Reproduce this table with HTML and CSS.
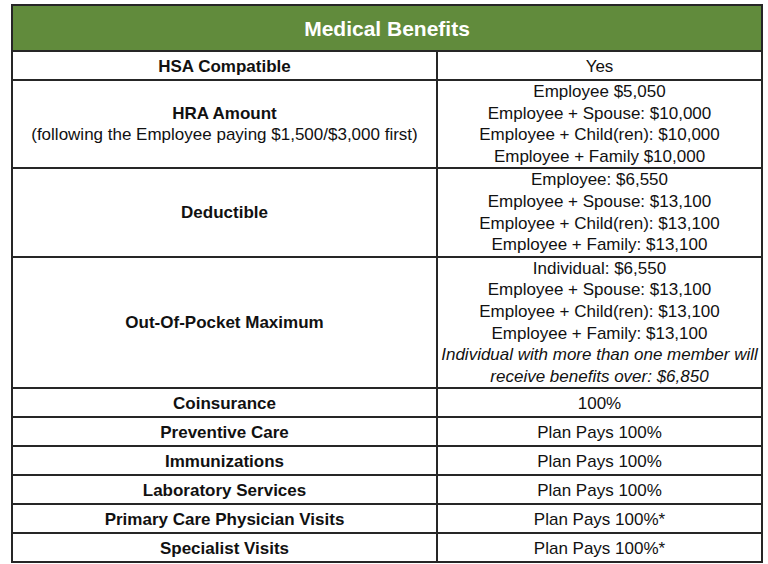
FILE: index.html
```html
<!DOCTYPE html>
<html>
<head>
<meta charset="utf-8">
<link rel="stylesheet" href="styles.css">
</head>
<body>
<div class="page">
<table class="benefits">
  <colgroup><col class="c1"><col class="c2"></colgroup>
  <thead>
    <tr><th colspan="2" class="title">Medical Benefits</th></tr>
  </thead>
  <tbody>
    <tr class="single"><th>HSA Compatible</th><td>Yes</td></tr>
    <tr class="multi"><th>HRA Amount<br><span class="note">(following the Employee paying $1,500/$3,000 first)</span></th>
      <td>Employee $5,050<br>Employee + Spouse: $10,000<br>Employee + Child(ren): $10,000<br>Employee + Family $10,000</td></tr>
    <tr class="multi"><th>Deductible</th>
      <td>Employee: $6,550<br>Employee + Spouse: $13,100<br>Employee + Child(ren): $13,100<br>Employee + Family: $13,100</td></tr>
    <tr class="multi"><th>Out-Of-Pocket Maximum</th>
      <td>Individual: $6,550<br>Employee + Spouse: $13,100<br>Employee + Child(ren): $13,100<br>Employee + Family: $13,100<br><em>Individual with more than one member will receive benefits over: $6,850</em></td></tr>
    <tr class="single"><th>Coinsurance</th><td>100%</td></tr>
    <tr class="single"><th>Preventive Care</th><td>Plan Pays 100%</td></tr>
    <tr class="single"><th>Immunizations</th><td>Plan Pays 100%</td></tr>
    <tr class="single"><th>Laboratory Services</th><td>Plan Pays 100%</td></tr>
    <tr class="single"><th>Primary Care Physician Visits</th><td>Plan Pays 100%*</td></tr>
    <tr class="single"><th>Specialist Visits</th><td>Plan Pays 100%*</td></tr>
  </tbody>
</table>
</div>
</body>
</html>
```
FILE: styles.css
```css
html, body {
  margin: 0;
  padding: 0;
  background: #ffffff;
}
.page {
  padding: 4px 0 0 11px;
}
.benefits {
  border-collapse: collapse;
  width: 750px;
  font-family: "Liberation Sans", Arial, sans-serif;
  font-size: 17px;
  color: #111;
  table-layout: fixed;
}
.c1 { width: 425px; }
.c2 { width: 325px; }
.benefits th, .benefits td {
  border: 2px solid #262626;
  text-align: center;
  vertical-align: middle;
  padding: 0 2px;
}
.benefits th {
  font-weight: bold;
}
.benefits .title {
  background: #618b3c;
  color: #ffffff;
  font-size: 21px;
  line-height: 24px;
  height: 42px;
  padding: 2px 0 0;
}
.single th, .single td {
  height: 25px;
  line-height: 21px;
  padding-top: 2px;
  padding-bottom: 0;
}
.multi th, .multi td {
  line-height: 21.6px;
}
.note {
  font-weight: normal;
}
.benefits em {
  font-style: italic;
}
```
